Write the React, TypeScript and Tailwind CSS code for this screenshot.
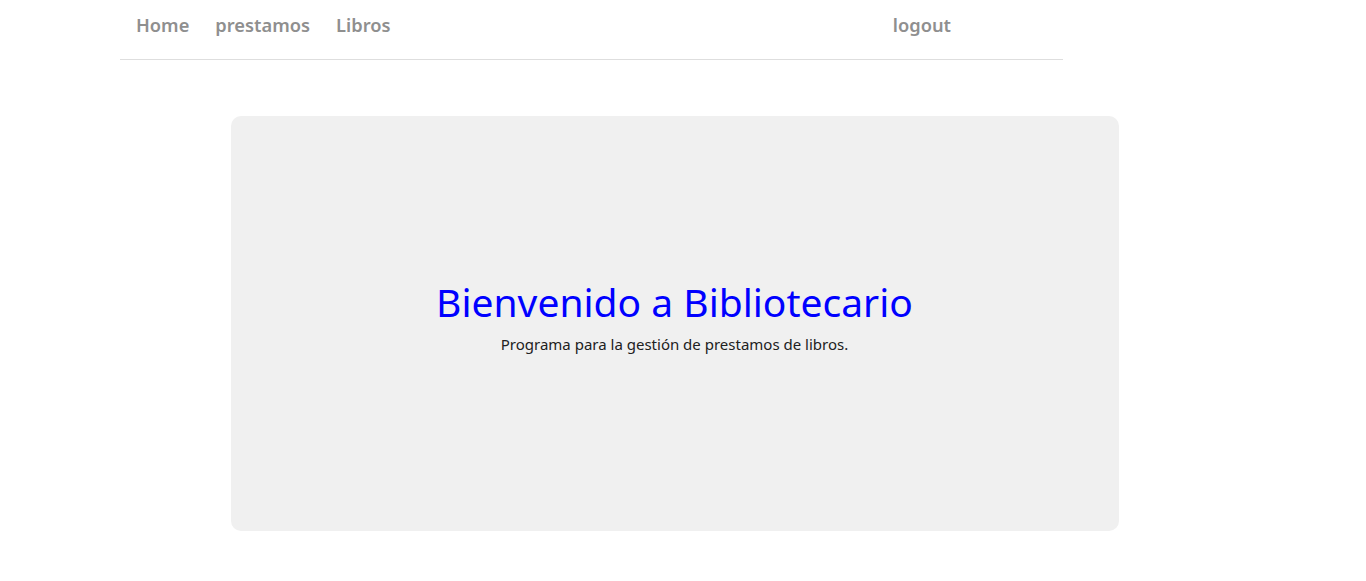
import React from 'react';

const links = ['Home', 'prestamos', 'Libros'];

const App: React.FC = () => {
  return (
    <div className="w-[1349px] min-h-[590px] bg-white" style={{ fontFamily: '"Noto Sans", "Open Sans", sans-serif' }}>
      {/* top nav */}
      <nav className="ml-[120px] w-[943px] h-[60px] border-b border-[#dedede] flex items-center justify-between pb-[9px]">
        <ul className="flex items-center pl-4 gap-[26px]">
          {links.map(link => (
            <li key={link}>
              <a href="#" className="text-[18.3px] font-semibold text-[#8f8f8f]">
                {link}
              </a>
            </li>
          ))}
        </ul>
        <a href="#" className="mr-[112px] text-[18.3px] font-semibold text-[#8f8f8f]">
          logout
        </a>
      </nav>

      <main className="flex justify-center pt-[56px] pb-[59px]">
        <section className="w-[888px] h-[415px] bg-[#f0f0f0] rounded-[10px] flex flex-col items-center justify-center pb-[14px]">
          <h1 className="text-[39px] leading-[48px] text-[#0000ff]">Bienvenido a Bibliotecario</h1>
          <p className="mt-[7px] text-[15px] text-[#212121]">Programa para la gestión de prestamos de libros.</p>
        </section>
      </main>
    </div>
  );
};

export default App;
